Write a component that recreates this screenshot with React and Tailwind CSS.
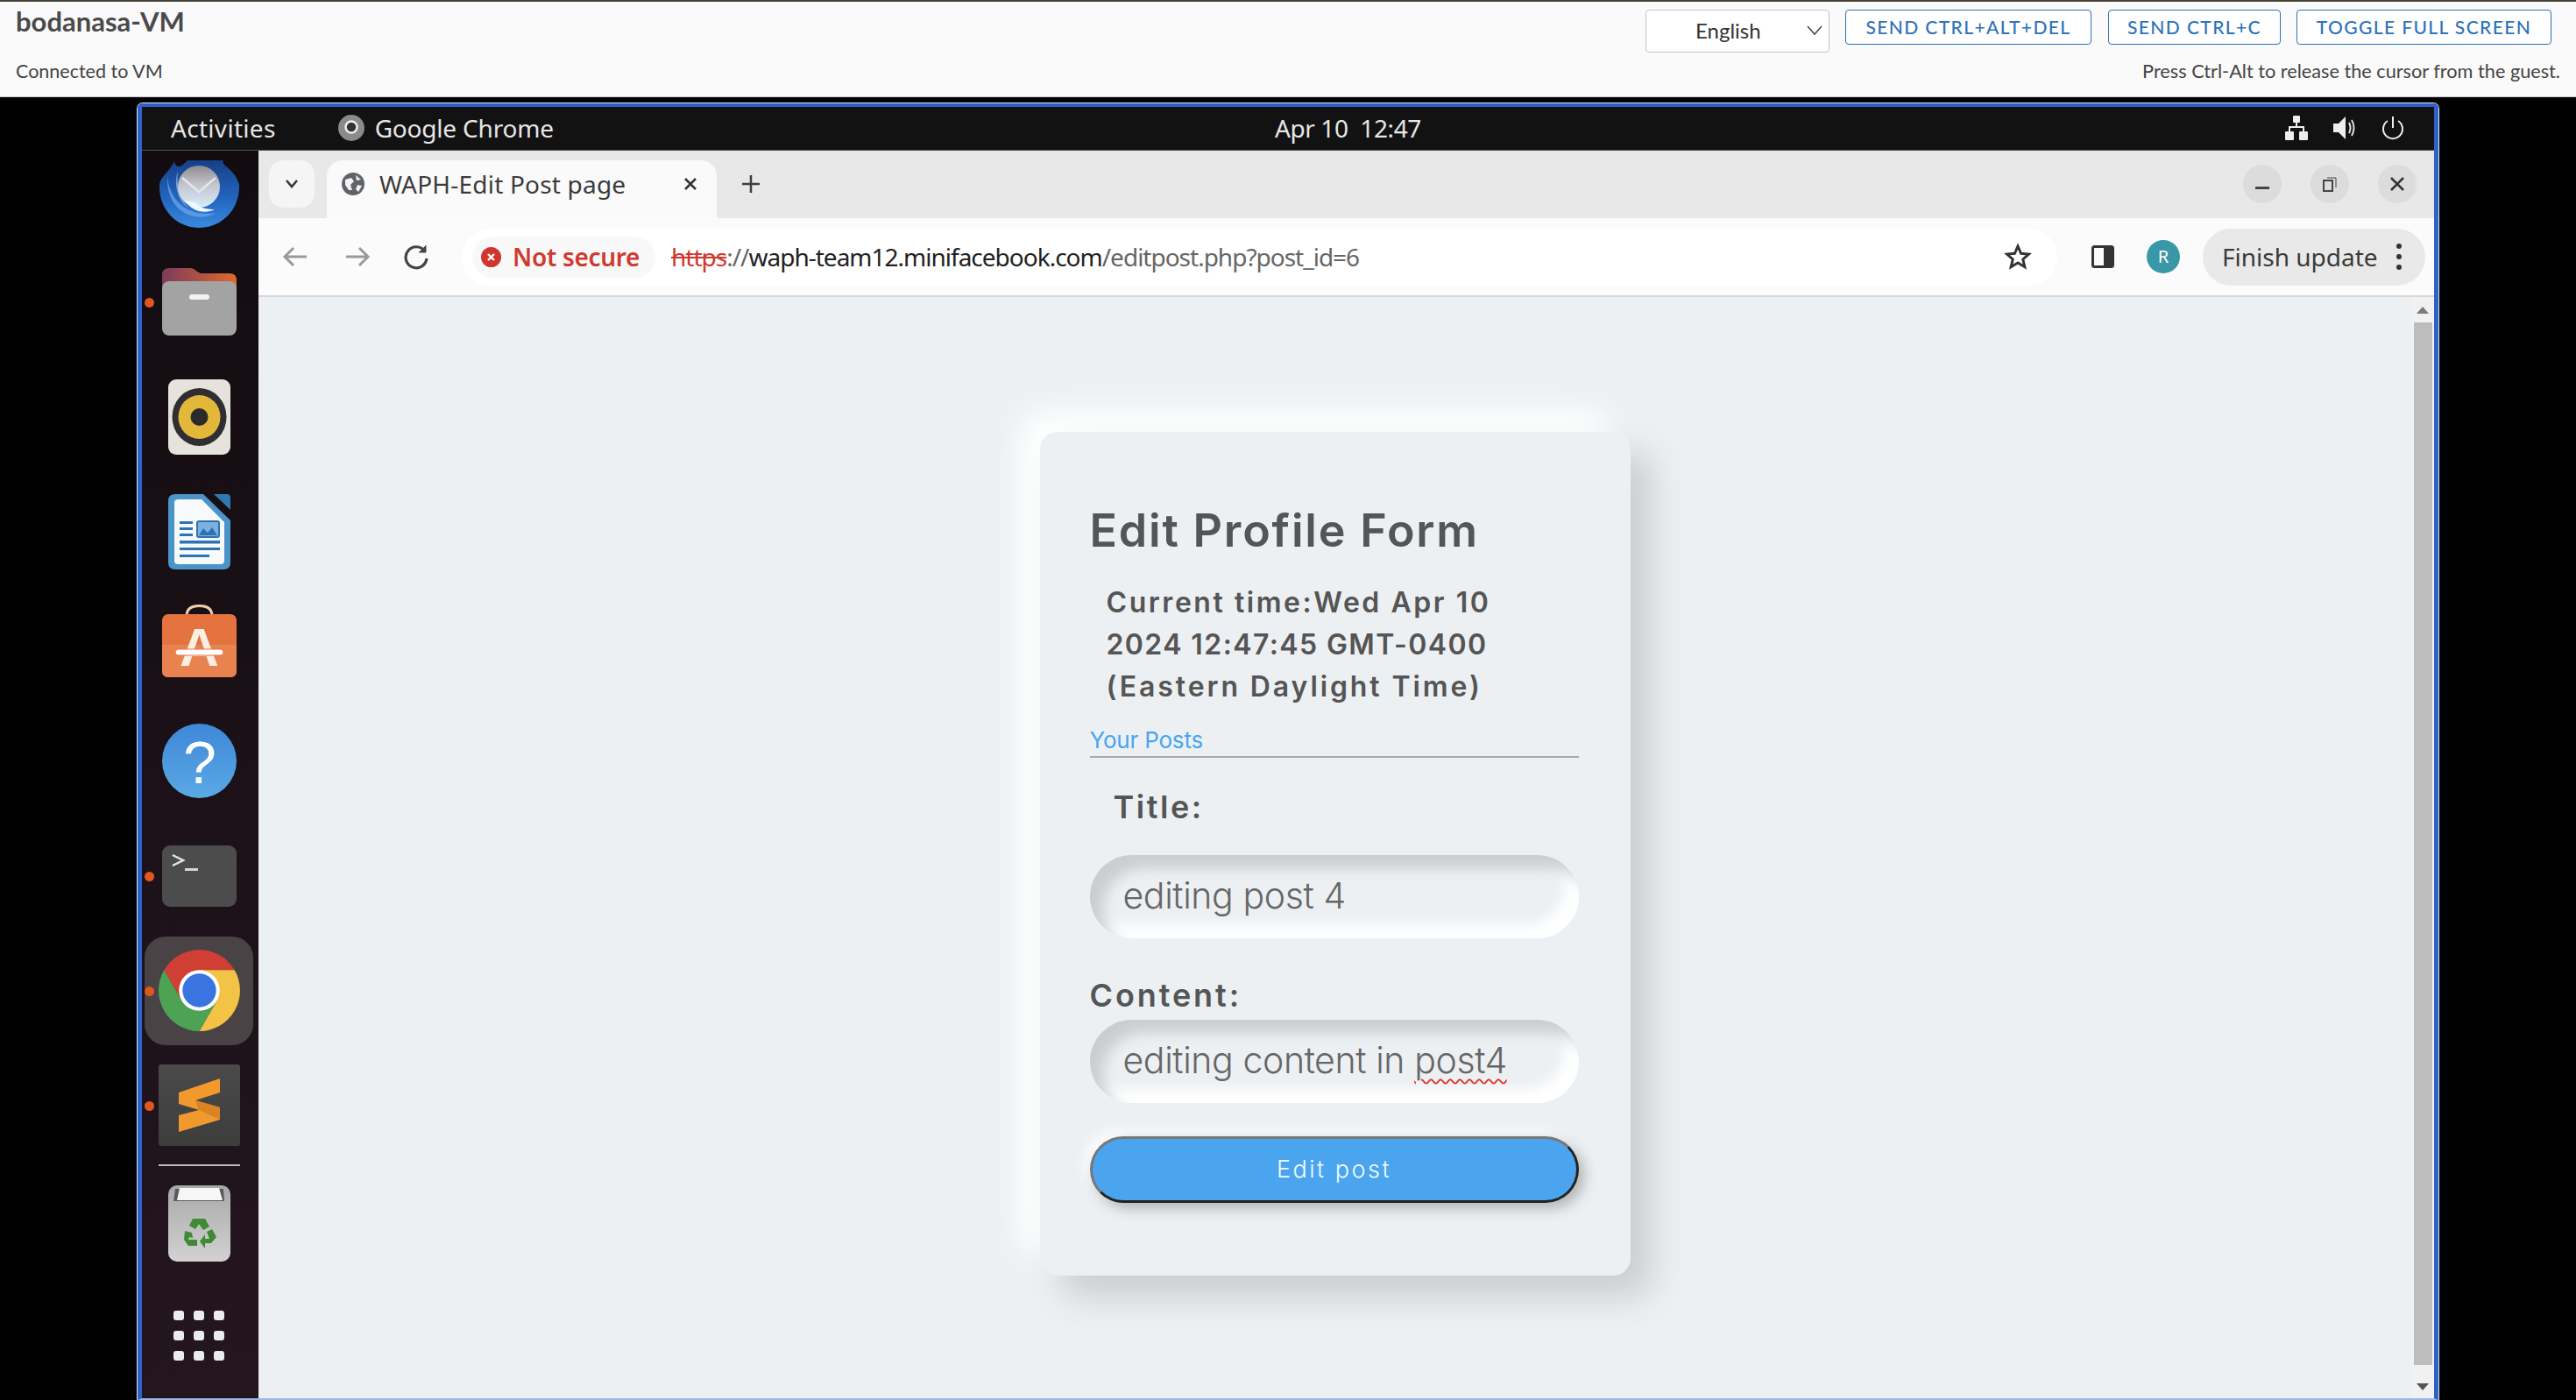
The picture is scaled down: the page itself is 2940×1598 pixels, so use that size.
import React from "react";

const UI = { fontFamily: '"Noto Sans", sans-serif' };
const POP = { fontFamily: 'Inter, "Liberation Sans", sans-serif' };

function Dot() {
  return <span className="absolute left-[3px] top-1/2 -mt-[5px] w-[11px] h-[11px] rounded-full bg-[#e0561f]" />;
}

function Cell({ children, dot, h = "h-[131px]" }) {
  return (
    <div className={`relative ${h} shrink-0 flex items-center justify-center pr-[3px]`}>
      {dot && <Dot />}
      {children}
    </div>
  );
}

function Thunderbird() {
  return (
    <svg width="93" height="93" viewBox="0 0 93 93">
      <defs>
        <linearGradient id="tb1" x1="0" y1="0" x2="0" y2="1"><stop offset="0" stopColor="#173f86" /><stop offset="0.6" stopColor="#2468c2" /><stop offset="1" stopColor="#3a8ae0" /></linearGradient>
        <linearGradient id="tb2" x1="0" y1="0" x2="0" y2="1"><stop offset="0" stopColor="#8f8a90" /><stop offset="0.45" stopColor="#c4c4cc" /><stop offset="1" stopColor="#d8ecfb" /></linearGradient>
      </defs>
      <path d="M1 44 C2 34 12 30 18 17 C20 26 26 24 33 16 L74 16 C70 22 88 26 92 44 C93 72 72 93 46 93 C21 93 0 72 1 44Z" fill="url(#tb1)" />
      <path d="M10 34 C12 62 34 82 66 76 C46 88 8 78 10 34Z" fill="#68a6e8" opacity="0.75" />
      <path d="M22 28 C20 44 24 60 34 70 C24 64 16 46 22 28Z" fill="#8fc0f0" opacity="0.7" />
      <circle cx="46" cy="46" r="24" fill="url(#tb2)" />
      <path d="M27 36 L46 52 L65 36" fill="none" stroke="#e4e6ec" strokeWidth="2.5" />
      <path d="M30 62 C38 74 52 78 64 72 C54 72 46 70 42 64Z" fill="#f0f8fe" />
    </svg>
  );
}

function Folder() {
  return (
    <svg width="85" height="77" viewBox="0 0 85 77">
      <defs>
        <linearGradient id="f1" x1="0" y1="0" x2="1" y2="0"><stop offset="0" stopColor="#7c3a5c" /><stop offset="1" stopColor="#e06a2c" /></linearGradient>
      </defs>
      <path d="M0 8 Q0 0 8 0 L32 0 Q36 0 40 4 L44 6 L77 6 Q85 6 85 14 L85 30 L0 30Z" fill="url(#f1)" />
      <rect x="0" y="15" width="85" height="62" rx="8" fill="#a3a3a3" />
      <rect x="31" y="30" width="23" height="6" rx="3" fill="#f3f3f3" />
    </svg>
  );
}

function Rhythmbox() {
  return (
    <svg width="71" height="86" viewBox="0 0 71 86">
      <rect width="71" height="86" rx="9" fill="#e6e3dc" />
      <ellipse cx="35.5" cy="43" rx="31" ry="33" fill="#2f2f33" />
      <ellipse cx="35.5" cy="43" rx="24" ry="25" fill="#e3b83a" />
      <circle cx="35.5" cy="43" r="10" fill="#2b2b2b" />
    </svg>
  );
}

function Writer() {
  return (
    <svg width="71" height="86" viewBox="0 0 71 86">
      <path d="M52 0 L67 0 Q71 0 71 4 L71 18Z" fill="#2f78b4" />
      <path d="M8 0 L40 0 L71 30 L71 78 Q71 86 63 86 L8 86 Q0 86 0 78 L0 8 Q0 0 8 0Z" fill="#4a94c9" />
      <path d="M11 6 L38 6 L64 32 L64 76 Q64 80 60 80 L11 80 Q7 80 7 76 L7 10 Q7 6 11 6Z" fill="#f7f9fb" />
      <g fill="#2c73b6">
        <rect x="13" y="31" width="15" height="3" /><rect x="13" y="38" width="15" height="3" /><rect x="13" y="45" width="15" height="3" />
        <rect x="13" y="53" width="46" height="3.5" /><rect x="13" y="61" width="46" height="3" /><rect x="13" y="69" width="34" height="3" />
      </g>
      <rect x="33" y="31" width="25" height="18" rx="2" fill="#7fb0dc" stroke="#2c73b6" strokeWidth="2" />
      <path d="M35 47 L40 39 L45 44 L50 38 L56 47Z" fill="#2c73b6" />
    </svg>
  );
}

function Software() {
  return (
    <svg className="-mt-[12px]" width="85" height="83" viewBox="0 0 85 83">
      <path d="M28 13 Q28 1.5 42.5 1.5 Q57 1.5 57 13" fill="none" stroke="#ebcfa8" strokeWidth="3" />
      <rect y="11" width="85" height="72" rx="7" fill="#e57340" />
      <path d="M0 46 H85 V76 Q85 83 78 83 H7 Q0 83 0 76Z" fill="#e8834f" />
      <text x="42.5" y="70" textAnchor="middle" fontSize="62" fontWeight="700" fill="#fbeee3" fontFamily="Liberation Sans, sans-serif">A</text>
      <rect x="15" y="51" width="55" height="7" rx="3.5" fill="#fff" stroke="#e57340" strokeWidth="1" />
    </svg>
  );
}

function Help() {
  return (
    <svg width="85" height="85" viewBox="0 0 85 85">
      <defs>
        <linearGradient id="h1" x1="0" y1="0" x2="0" y2="1"><stop offset="0" stopColor="#3f87d8" /><stop offset="1" stopColor="#5aa9e4" /></linearGradient>
      </defs>
      <circle cx="42.5" cy="42.5" r="42.5" fill="url(#h1)" />
      <text x="43" y="68" textAnchor="middle" fontSize="68" fontFamily="Liberation Sans, sans-serif" fill="#fff">?</text>
    </svg>
  );
}

function Terminal() {
  return (
    <svg width="85" height="70" viewBox="0 0 85 70">
      <rect width="85" height="70" rx="9" fill="#4c4c4c" />
      <path d="M12 11 L24 17 L12 23" fill="none" stroke="#e5e5e5" strokeWidth="2.5" />
      <rect x="26" y="26" width="15" height="3" fill="#d5d5d5" />
    </svg>
  );
}

function Chrome({ size = 93 }) {
  return (
    <svg width={size} height={size} viewBox="0 0 92 92">
      <path d="M6.2 23 A46 46 0 0 1 85.8 23 L46 23 L26 57.5Z" fill="#cf3f33" />
      <path d="M85.8 23 A46 46 0 0 1 46 92 L65.9 57.5 L46 23Z" fill="#f2c344" />
      <path d="M46 92 A46 46 0 0 1 6.2 23 L26 57.5 L65.9 57.5Z" fill="#4da253" />
      <circle cx="46" cy="46" r="23" fill="#fff" />
      <circle cx="46" cy="46" r="19" fill="#3a74e0" />
    </svg>
  );
}

function Sublime() {
  return (
    <svg width="93" height="93" viewBox="0 0 93 93">
      <defs>
        <linearGradient id="s1" x1="0" y1="0" x2="0" y2="1"><stop offset="0" stopColor="#4a4a4a" /><stop offset="1" stopColor="#3d3d3d" /></linearGradient>
      </defs>
      <rect width="93" height="93" rx="3" fill="url(#s1)" />
      <path d="M23 32 L70 16 L70 32 L42 41 L70 49 L70 63 L23 77 L23 58 L46 52 L23 45Z" fill="#f2992e" />
      <path d="M42 41 L70 49 L70 63 L46 52Z" fill="#d98424" />
    </svg>
  );
}

function Trash() {
  return (
    <svg width="71" height="87" viewBox="0 0 71 87">
      <defs>
        <linearGradient id="t1" x1="0" y1="0" x2="0" y2="1"><stop offset="0" stopColor="#a8a8a8" /><stop offset="1" stopColor="#d2d2d2" /></linearGradient>
      </defs>
      <rect width="71" height="87" rx="10" fill="url(#t1)" />
      <path d="M8 4 L63 4 L64 18 L6 18Z" fill="#5a5a5a" />
      <path d="M13 3 L58 3 L62 17 L10 17Z" fill="#f6f6f6" />
      <g fill="#3f8a32">
        <path d="M28 38 H42 L47 47 L40 51 L35 44 L31 50 L24 46Z" />
        <path d="M50 50 L55 59 L49 66 H42 V72 L36 64 L42 56 V61 H47 L44 53Z" />
        <path d="M19 52 L27 54 L28 60 L24 59 L23 62 L33 62 V69 H23 L18 62Z" />
      </g>
    </svg>
  );
}

function Grid() {
  return (
    <div className="grid grid-cols-3 gap-x-[11px] gap-y-[12px]">
      {Array.from({ length: 9 }).map((_, i) => (
        <span key={i} className="w-[12px] h-[11px] rounded-[3px] bg-[#ececec]" />
      ))}
    </div>
  );
}

function Dock() {
  return (
    <div className="w-[133px] shrink-0 overflow-hidden bg-gradient-to-b from-[#120c10] to-[#24161f]">
      <div className="-mt-[24px] flex flex-col">
        <Cell><Thunderbird /></Cell>
        <Cell dot><Folder /></Cell>
        <Cell><Rhythmbox /></Cell>
        <Cell><Writer /></Cell>
        <Cell><Software /></Cell>
        <Cell><Help /></Cell>
        <Cell dot><Terminal /></Cell>
        <Cell dot>
          <div className="w-[124px] h-[124px] rounded-[24px] bg-[#4a4346] flex items-center justify-center"><Chrome /></div>
        </Cell>
        <Cell dot><Sublime /></Cell>
        <div className="mt-[2px] ml-[19px] w-[93px] h-[2px] bg-[#bdb8bb]" />
        <Cell h="h-[131px]"><Trash /></Cell>
        <Cell h="h-[124px]"><Grid /></Cell>
      </div>
    </div>
  );
}

function TopPanel() {
  return (
    <div className="relative h-[50px] shrink-0 bg-[#121212] border-b border-[#555] flex items-center pb-[2px] text-[28px] text-[#e6e6e6]" style={UI}>
      <span className="ml-[33px] tracking-[0.3px]">Activities</span>
      <svg className="ml-[71px]" width="30" height="30" viewBox="0 0 30 30">
        <circle cx="15" cy="15" r="15" fill="#8a8a8a" />
        <circle cx="15" cy="14" r="6.5" fill="#333" stroke="#eee" strokeWidth="2.5" />
      </svg>
      <span className="ml-[12px] tracking-[-0.2px]">Google Chrome</span>
      <span className="absolute left-[1293px] tracking-[-0.4px]">Apr 10 &nbsp;12:47</span>
      <div className="ml-auto mr-[34px] flex items-center gap-[29px]">
        <svg width="26" height="28" viewBox="0 0 26 28" fill="#eee">
          <rect x="9" y="0" width="8" height="8" rx="1" /><rect x="0" y="18" width="10" height="10" rx="1" /><rect x="16" y="18" width="10" height="10" rx="1" />
          <path d="M12 8 H14 V12 H22 V18 H20 V14 H6 V18 H4 V12 H12Z" />
        </svg>
        <svg width="26" height="28" viewBox="0 0 26 28">
          <path d="M0 9 H6 L14 1 V27 L6 19 H0Z" fill="#eee" />
          <path d="M18 8 Q21 14 18 20 M21 5 Q26 14 21 23" fill="none" stroke="#ddd" strokeWidth="2" />
        </svg>
        <svg width="26" height="28" viewBox="0 0 26 28" fill="none" stroke="#eee" strokeWidth="2">
          <path d="M13 1 V14" />
          <path d="M7 6 A11 11 0 1 0 19 6" />
        </svg>
      </div>
    </div>
  );
}

function WinBtn({ children }) {
  return <div className="w-[44px] h-[44px] rounded-full bg-[#dcdcdc] flex items-center justify-center">{children}</div>;
}

function TabStrip() {
  return (
    <div className="h-[77px] shrink-0 bg-[#e8e8e8] flex pt-[11px] pl-[12px] text-[#3c3c3c]" style={UI}>
      <div className="w-[52px] h-[54px] rounded-[16px] bg-[#f5f5f5] flex items-center justify-center">
        <svg width="18" height="12" viewBox="0 0 18 12" fill="none" stroke="#333" strokeWidth="2.5"><path d="M3 2 L9 9 L15 2" /></svg>
      </div>
      <div className="ml-[14px] w-[445px] h-[66px] rounded-t-[18px] bg-[#fafafa] flex items-center pl-[17px] pb-[12px]">
        <svg width="26" height="26" viewBox="0 0 26 26">
          <circle cx="13" cy="13" r="13" fill="#5f6368" />
          <path d="M4 8 L11 6 L14 10 L10 14 L12 20 L8 20 L4 14Z M16 3 L22 8 L17 9Z M18 14 L23 15 L19 22 L16 19Z" fill="#f3f3f3" />
        </svg>
        <span className="ml-[17px] text-[28px] leading-none tracking-[0.2px]">WAPH-Edit Post page</span>
        <svg className="ml-auto mr-[22px]" width="16" height="16" viewBox="0 0 16 16" stroke="#333" strokeWidth="2.5"><path d="M2 2 L14 14 M14 2 L2 14" /></svg>
      </div>
      <svg className="ml-[29px] mt-[17px]" width="20" height="20" viewBox="0 0 20 20" stroke="#3c3c3c" strokeWidth="2.5"><path d="M10 0 V20 M0 10 H20" /></svg>
      <div className="ml-auto mr-[20px] mt-[5px] flex gap-[33px] h-[44px]">
        <WinBtn><span className="mt-[8px] w-[16px] h-[3px] bg-[#444]" /></WinBtn>
        <WinBtn>
          <svg width="16" height="18" viewBox="0 0 16 18" fill="none" stroke="#444" strokeWidth="2"><rect x="1" y="5" width="10" height="12" /><path d="M5 2 H15 V13" strokeWidth="1" /></svg>
        </WinBtn>
        <WinBtn>
          <svg width="16" height="16" viewBox="0 0 16 16" stroke="#333" strokeWidth="2.5"><path d="M1 1 L15 15 M15 1 L1 15" /></svg>
        </WinBtn>
      </div>
    </div>
  );
}

function Toolbar() {
  return (
    <div className="h-[90px] shrink-0 bg-[#fbfbfb] border-b-2 border-[#d6d6d6] flex items-center pl-[25px] text-[#333]" style={UI}>
      <div className="flex items-center gap-[33px]">
        <svg width="36" height="30" viewBox="0 0 36 30" fill="none" stroke="#9a9a9a" strokeWidth="3"><path d="M30 15 H6 M15 5 L5 15 L15 25" /></svg>
        <svg width="36" height="30" viewBox="0 0 36 30" fill="none" stroke="#9a9a9a" strokeWidth="3"><path d="M6 15 H30 M21 5 L31 15 L21 25" /></svg>
        <svg width="36" height="30" viewBox="0 0 36 30" fill="none" stroke="#444" strokeWidth="3.2"><path d="M27 9 A12 12 0 1 0 29 17" /><path d="M28 2 V10 H20" fill="#444" strokeWidth="1" /></svg>
      </div>
      <div className="ml-[33px] w-[1821px] h-[65px] rounded-full bg-white flex items-center pl-[12px] pr-[29px]">
        <div className="w-[209px] h-[47px] rounded-full bg-[#f8f8f8] flex items-center pl-[10px]">
          <svg width="23" height="23" viewBox="0 0 23 23">
            <circle cx="11.5" cy="11.5" r="11.5" fill="#d0362d" />
            <path d="M8 8 L15 15 M15 8 L8 15" stroke="#fff" strokeWidth="2.4" />
          </svg>
          <span className="ml-[13px] text-[28px] font-semibold tracking-[-0.3px] text-[#cf3a30] leading-none">Not secure</span>
        </div>
        <span className="ml-[18px] text-[28px] tracking-[-1px] leading-none text-[#222] whitespace-nowrap">
          <span className="line-through text-[#cf3a30]">https</span><span className="text-[#666]">://</span>waph-team12.minifacebook.com<span className="text-[#666]">/editpost.php?post_id=6</span>
        </span>
        <svg className="ml-auto" width="32" height="32" viewBox="0 0 24 24" fill="none" stroke="#333" strokeWidth="2.2"><path d="M12 3 L14.7 9.2 L21.4 9.8 L16.3 14.2 L17.9 20.8 L12 17.3 L6.1 20.8 L7.7 14.2 L2.6 9.8 L9.3 9.2Z" /></svg>
      </div>
      <svg className="ml-[39px]" width="26" height="26" viewBox="0 0 26 26"><rect x="1.5" y="1.5" width="23" height="23" rx="2" fill="none" stroke="#333" strokeWidth="3" /><rect x="14" y="2" width="11" height="22" fill="#333" /></svg>
      <div className="ml-[37px] w-[38px] h-[38px] rounded-full bg-[#3a97a8] flex items-center justify-center text-white text-[20px] leading-none">R</div>
      <div className="ml-[26px] w-[254px] h-[65px] rounded-full bg-[#e9e9e9] flex items-center pl-[22px] text-[28px] text-[#3a3a3a] leading-none whitespace-nowrap">
        Finish update
        <div className="ml-auto mr-[27px] flex flex-col gap-[6px]">
          <span className="w-[6px] h-[6px] rounded-full bg-[#333]" />
          <span className="w-[6px] h-[6px] rounded-full bg-[#333]" />
          <span className="w-[6px] h-[6px] rounded-full bg-[#333]" />
        </div>
      </div>
    </div>
  );
}

const INPUT = "h-[95px] rounded-full bg-[#ecf0f3] shadow-[inset_15px_15px_15px_#cbced1,inset_-15px_-15px_15px_#ffffff] flex items-center pl-[38px] pb-[2px] text-[41px] font-light text-[#666666] tracking-[-0.4px]";

function Card() {
  return (
    <div className="w-[674px] h-[963px] rounded-[20px] bg-[#ecf0f3] shadow-[24px_24px_38px_#cbced1,-24px_-24px_38px_#ffffff] pt-[83px] pl-[57px] pr-[59px] text-[#555]" style={POP}>
      <h1 className="text-[52px] leading-[60px] font-semibold tracking-[1.8px] whitespace-nowrap">Edit Profile Form</h1>
      <p className="mt-[28px] ml-[19px] text-[32px] leading-[48px] font-semibold whitespace-nowrap">
        <span className="block tracking-[2.55px]">Current time:Wed Apr 10</span>
        <span className="block tracking-[1.4px]">2024 12:47:45 GMT-0400</span>
        <span className="block tracking-[2.9px]">(Eastern Daylight Time)</span>
      </p>
      <div className="mt-[19px] h-[38px] border-b-2 border-[#a8a8a8] text-[26px] leading-[36px] tracking-[-0.2px] text-[#4aa5ee]">Your Posts</div>
      <label className="block mt-[34px] ml-[27px] text-[36px] leading-[44px] font-semibold tracking-[2.5px]">Title:</label>
      <div className={`${INPUT} mt-[33px]`}>editing post 4</div>
      <label className="block mt-[43px] text-[36px] leading-[44px] font-semibold tracking-[2.9px]">Content:</label>
      <div className={`${INPUT} mt-[6px]`}>
        <span>editing content in <span className="underline decoration-wavy decoration-[#e0342c] decoration-[2px] underline-offset-[6px]">post4</span></span>
      </div>
      <button className="mt-[38px] w-full h-[76px] rounded-full bg-[#4aa5ee] border-[3px] border-t-[#777777] border-l-[#777777] border-r-[#222222] border-b-[#222222] shadow-[6px_6px_15px_#b1b1b1,-6px_-6px_15px_#ffffff] text-[27px] text-[#f2fbff] font-light tracking-[2.5px]">Edit post</button>
    </div>
  );
}

function Scrollbar() {
  return (
    <div className="w-[26px] shrink-0 bg-[#f1f1f1] flex flex-col items-center">
      <div className="h-[29px] flex items-center justify-center shrink-0">
        <span className="w-0 h-0 border-x-[7px] border-x-transparent border-b-[8px] border-b-[#7a7a7a]" />
      </div>
      <div className="flex-1 w-[21px] ml-[1px] bg-[#bdbdbd]" />
      <div className="h-[38px] flex items-center justify-center shrink-0 pt-[12px]">
        <span className="w-0 h-0 border-x-[7px] border-x-transparent border-t-[8px] border-t-[#555]" />
      </div>
    </div>
  );
}

function Header() {
  const btn = "h-[40px] rounded-[4px] border border-[#2f70b5] bg-white text-[#2d72b8] text-[21px] tracking-[1.4px] flex items-center justify-center font-medium";
  return (
    <div className="h-[111px] shrink-0 border-t-2 border-t-[#4a4238] border-b border-b-[#c9c9c9] bg-[#fafafa] flex justify-between text-[#444]" style={{ fontFamily: 'Lato, sans-serif' }}>
      <div className="pl-[18px] flex flex-col">
        <div className="mt-[4px] text-[31px] leading-[36px] font-bold text-[#4a4a4a]">bodanasa-VM</div>
        <div className="mt-[25px] text-[21.5px] leading-[28px]">Connected to VM</div>
      </div>
      <div className="pr-[18px] flex flex-col items-end">
        <div className="mt-[9px] pr-[10px] flex items-start">
          <div className="w-[210px] h-[49px] rounded-[4px] border border-[#c4c4c4] bg-white flex items-center pl-[56px] pr-[7px] pb-[2px] text-[24px] text-[#333]">
            English
            <svg className="ml-auto" width="18" height="12" viewBox="0 0 18 12" fill="none" stroke="#444" strokeWidth="1.5"><path d="M1 1 L9 10 L17 1" /></svg>
          </div>
          <div className={`ml-[18px] w-[281px] ${btn}`}>SEND CTRL+ALT+DEL</div>
          <div className={`ml-[19px] w-[197px] ${btn}`}>SEND CTRL+C</div>
          <div className={`ml-[18px] w-[291px] ${btn}`}>TOGGLE FULL SCREEN</div>
        </div>
        <div className="mt-[7px] text-[21.7px] leading-[28px]">Press Ctrl-Alt to release the cursor from the guest.</div>
      </div>
    </div>
  );
}

export default function App() {
  return (
    <div className="w-[2940px] h-[1598px] bg-black overflow-hidden flex flex-col">
      <Header />
      <div className="mt-[7px] ml-[157px] w-[2626px] flex-1 min-h-0 flex flex-col border-x-[5px] border-t-[4px] border-b-2 border-x-[#2f62c9] border-t-[#2f62c9] border-b-[#9db6e6] rounded-t-[6px] ring-1 ring-[#dfe6f5]">
        <TopPanel />
        <div className="flex-1 min-h-0 flex">
          <Dock />
          <div className="flex-1 min-w-0 flex flex-col">
            <TabStrip />
            <Toolbar />
            <div className="flex-1 min-h-0 flex bg-[#ecf0f3]">
              <div className="flex-1 flex justify-center pt-[154px]">
                <Card />
              </div>
              <Scrollbar />
            </div>
          </div>
        </div>
      </div>
    </div>
  );
}
